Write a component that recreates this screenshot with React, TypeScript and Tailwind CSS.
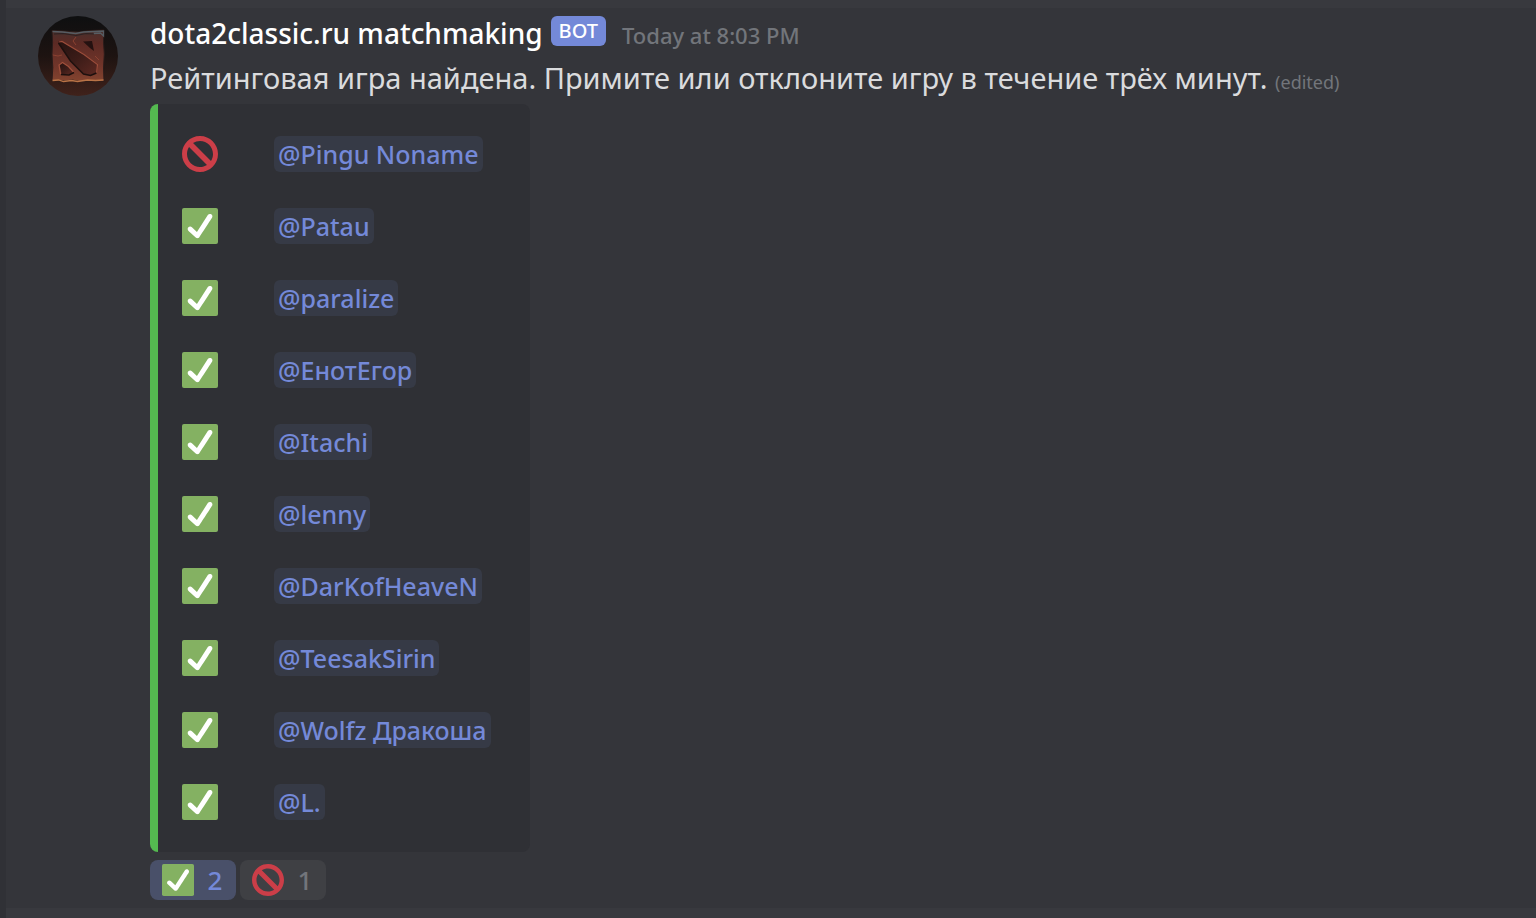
const players = [
  { name: "Pingu Noname", accepted: false },
  { name: "Patau", accepted: true },
  { name: "paralize", accepted: true },
  { name: "ЕнотЕгор", accepted: true },
  { name: "Itachi", accepted: true },
  { name: "lenny", accepted: true },
  { name: "DarKofHeaveN", accepted: true },
  { name: "TeesakSirin", accepted: true },
  { name: "Wolfz Дракоша", accepted: true },
  { name: "L.", accepted: true },
];

function CheckEmoji({ className }: { className: string }) {
  return (
    <svg viewBox="0 0 36 36" className={className} role="img" aria-label="accepted">
      <rect width="36" height="36" rx="2" fill="#84b162" />
      <path
        fill="#fff"
        d="M29.28 6.362c-1.156-.751-2.704-.422-3.458.736L14.936 23.877l-5.029-4.65c-1.014-.938-2.596-.875-3.533.138-.937 1.014-.875 2.596.139 3.533l7.209 6.666c.48.445 1.09.665 1.696.665.673 0 1.534-.282 2.099-1.139.332-.506 12.5-19.27 12.5-19.27.751-1.159.421-2.707-.737-3.458z"
      />
    </svg>
  );
}

function ProhibitedEmoji({ className }: { className: string }) {
  return (
    <svg viewBox="0 0 36 36" className={className} role="img" aria-label="declined">
      <path
        fill="#cc3e48"
        d="M18 0C8.059 0 0 8.059 0 18s8.059 18 18 18 18-8.059 18-18S27.941 0 18 0zm13 18c0 2.565-.753 4.95-2.035 6.965L11.036 7.036C13.05 5.753 15.435 5 18 5c7.18 0 13 5.821 13 13zM5 18c0-2.565.753-4.95 2.036-6.964l17.929 17.929C22.95 30.247 20.565 31 18 31c-7.179 0-13-5.82-13-13z"
      />
    </svg>
  );
}

function Avatar() {
  return (
    <svg viewBox="0 0 80 80" className="size-20 shrink-0" role="img" aria-label="dota2classic.ru">
      <defs>
        <linearGradient id="backdrop" x1="0" y1="0" x2="0" y2="1">
          <stop offset="0" stopColor="#0e0f10" />
          <stop offset="0.5" stopColor="#1d1311" />
          <stop offset="1" stopColor="#40221b" />
        </linearGradient>
        <linearGradient id="stone" x1="0" y1="0" x2="0" y2="1">
          <stop offset="0" stopColor="#47302d" />
          <stop offset="0.25" stopColor="#5c2a24" />
          <stop offset="0.7" stopColor="#71352a" />
          <stop offset="1" stopColor="#83442f" />
        </linearGradient>
        <linearGradient id="hollow" x1="0" y1="0" x2="1" y2="1">
          <stop offset="0" stopColor="#241210" />
          <stop offset="0.5" stopColor="#3c1c18" />
          <stop offset="1" stopColor="#5e2922" />
        </linearGradient>
        <clipPath id="disc">
          <circle cx="40" cy="40" r="40" />
        </clipPath>
      </defs>
      <g clipPath="url(#disc)">
        <rect width="80" height="80" fill="url(#backdrop)" />
        <path d="M14 14.500l12 .5 14 1 12-1.500 14-.5-.5 12 .8 12-.8 14 .5 13-12-.5-12 1-8-1.500-6 1-14-.5.8-13-.8-13 .6-12z" fill="url(#stone)" stroke="#2b1c1a" strokeWidth="1" />
        <path d="M14.500 15.500l10 .5 13 1.500 8-1.500 20-1v5l-3-3-7 .5" fill="none" stroke="#565d63" strokeWidth="1.300" />
        <path d="M16 18l9-.5 13 2 10-2 8 .5" fill="none" stroke="#2d2222" strokeWidth="1.200" />
        <path d="M14.500 64.500l6-.5 5 1.500 8-1 6 1 10-1.500 8 .5 8-.5" fill="none" stroke="#b97346" strokeWidth="1.300" />
        <path d="M15 39l5 1 4-1M38 21l-3 4 3 4M61 44l-4-4" fill="none" stroke="#8b4232" strokeWidth="1" />
        <path d="M20.500 25.500l3-.5 22.500 13 14 10-1 9-6 2.500-7-1.500-13-13-12-17z" fill="url(#hollow)" />
        <path d="M21 26l3-.5 22 13 13.500 10-1 9" fill="none" stroke="#9b4c3a" strokeWidth="1.200" />
        <path d="M20.500 27l12 18 13 13 7 1.500 6-2.500" fill="none" stroke="#1d100e" strokeWidth="1.500" />
        <path d="M45 25.500l9-.5 2 10-4-3z" fill="#241110" />
        <path d="M21.500 48l3-1.500 6 4 5 5.500-4 2.500-8-.5z" fill="url(#hollow)" />
        <path d="M22.500 58l-1.500-9 3.500-2.500 6 4 5 5.500" fill="none" stroke="#a04f3b" strokeWidth="1.200" />
        <path d="M23 58.500l8 .5 5-2.500" fill="none" stroke="#1d100e" strokeWidth="1.500" />
      </g>
    </svg>
  );
}

export default function App() {
  return (
    <div className="min-h-screen bg-[#303136] pl-[6px] font-['Noto_Sans',sans-serif]">
      <main className="min-h-screen bg-[#38393e] pt-2">
        <article className="flex gap-8 bg-[#34353a] pt-2 pr-8 pb-2 pl-8">
          <Avatar />
          <div className="min-w-0">
            <header className="flex h-9 items-start">
              <h1 className="text-[28px] leading-[34px] font-medium whitespace-nowrap text-white">dota2classic.ru matchmaking</h1>
              <span className="ml-2 rounded-md bg-[#7489d8] px-2 text-[20px] leading-[30px] font-medium text-white">BOT</span>
              <time className="ml-4 text-[22px] leading-[38px] font-medium whitespace-nowrap text-[#72757b]">Today at 8:03 PM</time>
            </header>
            <p className="mt-1 text-[29px] leading-[44px] text-[#dadbdd]">
              Рейтинговая игра найдена. Примите или отклоните игру в течение трёх минут.{" "}
              <span className="text-[18px] leading-none text-[#72757b]">(edited)</span>
            </p>
            <section className="mt-1 w-fit min-w-[380px] rounded-lg border-l-8 border-[#54b950] bg-[#2f3035] py-8 pr-8 pl-6">
              <ul className="flex flex-col gap-9">
                {players.map((player) => (
                  <li key={player.name} className="flex h-9 items-center gap-14">
                    {player.accepted ? <CheckEmoji className="size-9" /> : <ProhibitedEmoji className="size-9" />}
                    <a href="#" className="rounded-md bg-[#363a46] px-1 text-[25px] leading-9 font-medium whitespace-nowrap text-[#7489d8]">
                      @{player.name}
                    </a>
                  </li>
                ))}
              </ul>
            </section>
            <div className="mt-2 flex gap-1">
              <button className="flex h-10 items-center gap-3 rounded-lg bg-[#495069] px-3 text-[26px] leading-9 font-medium text-[#7489d8]">
                <CheckEmoji className="size-8" />
                <span className="min-w-[18px] text-center">2</span>
              </button>
              <button className="flex h-10 items-center gap-3 rounded-lg bg-[#3f4044] px-3 text-[26px] leading-9 font-medium text-[#72757b]">
                <ProhibitedEmoji className="size-8" />
                <span className="min-w-[18px] text-center">1</span>
              </button>
            </div>
          </div>
        </article>
      </main>
    </div>
  );
}
